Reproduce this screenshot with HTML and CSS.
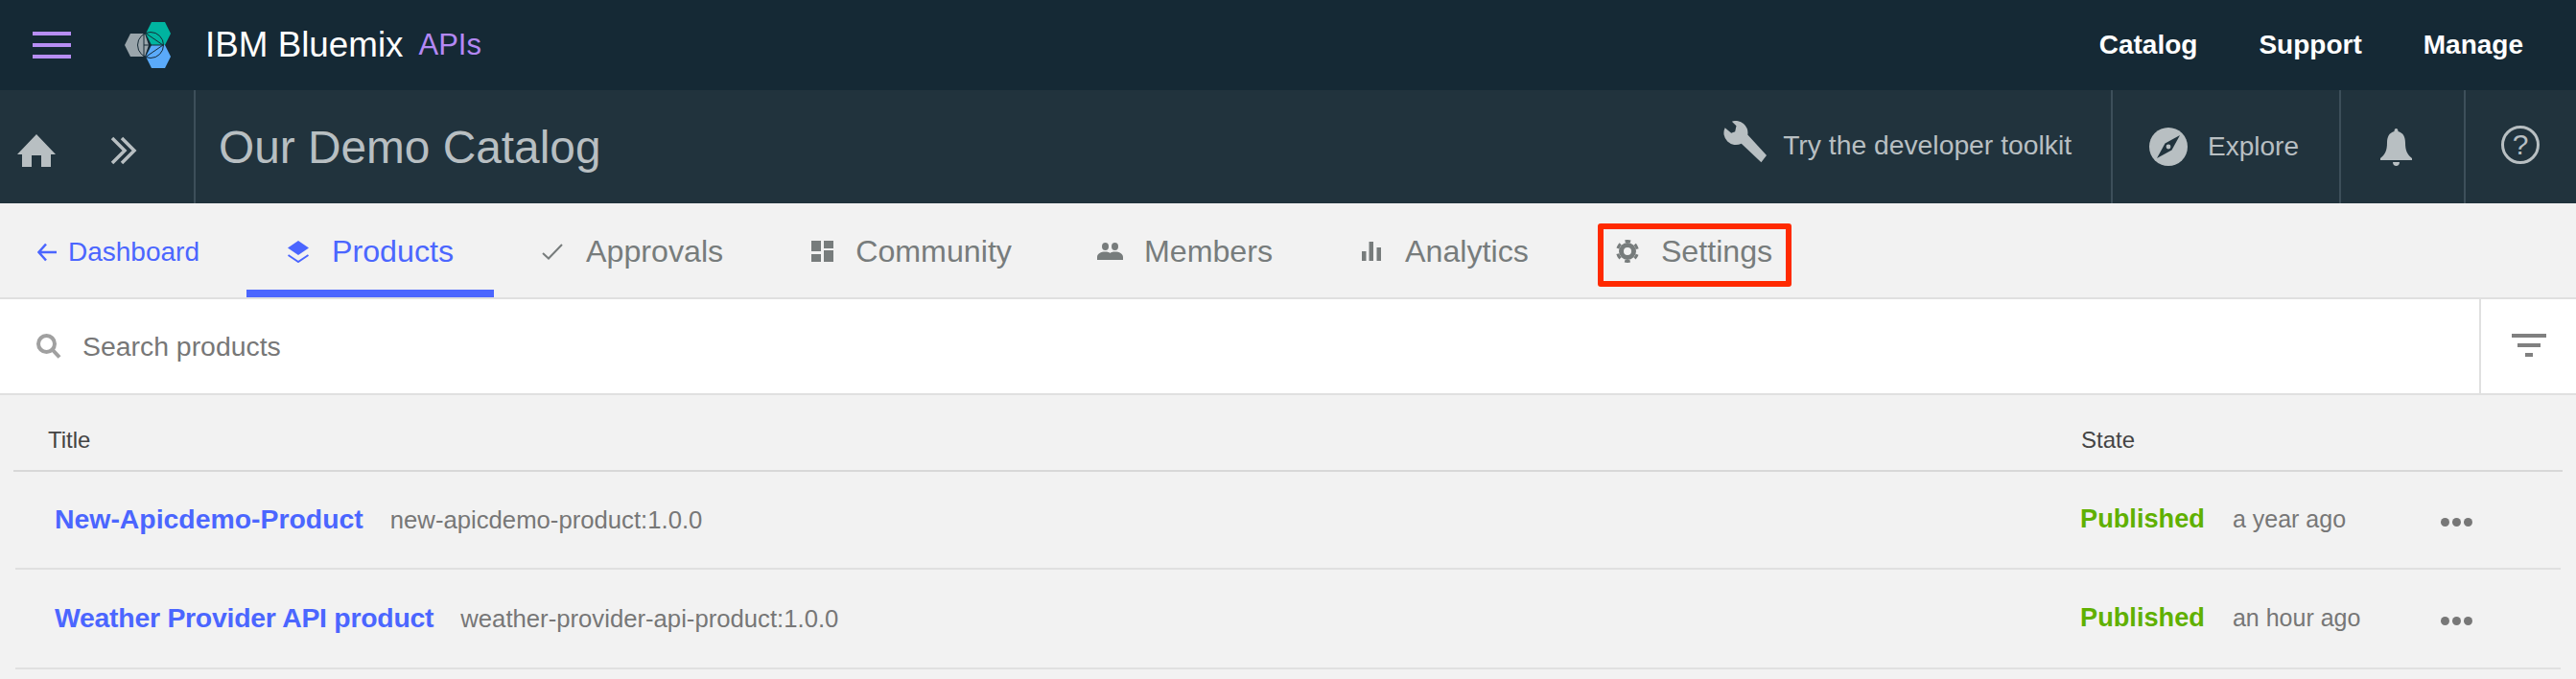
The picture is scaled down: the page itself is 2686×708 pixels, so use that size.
FILE: index.html
```html
<!DOCTYPE html>
<html lang="en">
<head>
    <meta charset="UTF-8">
    <title>Our Demo Catalog - IBM Bluemix APIs</title>
    <link rel="stylesheet" href="styles.css">
</head>
<body>
    <header class="topbar">
        <div class="hamburger"><span></span><span></span><span></span></div>
        <svg class="logo" viewBox="130 20 48 48">
            <polygon fill="#9aa5ab" points="130,44 136,32 151,32 155,44 151,56 136,56"/>
            <polygon fill="#00b4a0" points="152,32 158,20 172,20 178,32 172,44 158,44"/>
            <polygon fill="#5aaafa" points="152,56 158,44 172,44 178,56 172,68 158,68"/>
            <g fill="none" stroke="#152935" stroke-width="1">
                <circle cx="157" cy="44" r="13.5"/>
                <path d="M150 32V56M151 31L170 44L151 57M150 44H170"/>
            </g>
        </svg>
        <span class="brand">IBM Bluemix</span>
        <span class="brand-sub">APIs</span>
        <nav class="topnav">
            <a>Catalog</a>
            <a>Support</a>
            <a>Manage</a>
        </nav>
    </header>

    <div class="subbar">
        <div class="crumbs">
            <svg class="home" viewBox="0 0 40 34"><path d="M20 0L40 21H35V34H25V22H15V34H5V21H0Z"/></svg>
            <svg class="chevrons" viewBox="0 0 30 30"><path d="M2 2L15 15L2 28M12 2L25 15L12 28"/></svg>
        </div>
        <div class="catalog-name">Our Demo Catalog</div>
        <div class="tools">
            <div class="tool tool-kit">
                <svg class="wrench" viewBox="36 18 138 134"><path d="M40 40L60 57L72 52L76 34L62 20A38 38 0 0 1 112 62L172 128L155 150L92 90A38 38 0 0 1 40 40Z"/></svg>
                <span>Try the developer toolkit</span>
            </div>
            <div class="tool tool-explore">
                <svg class="compass" viewBox="0 0 40 40">
                    <circle cx="20" cy="20" r="20" fill="#b8bfc2"/>
                    <path d="M32 8L23.5 23.5L8 32L16.5 16.5Z" fill="#21333d"/>
                    <circle cx="20" cy="20" r="2.4" fill="#b8bfc2"/>
                </svg>
                <span>Explore</span>
            </div>
            <div class="tool tool-bell">
                <svg class="bell" viewBox="0 0 33 39"><path d="M16.5 0C18 0 18.5 1.500 18.500 3C24 4.500 26 9 26 15C26 23 28 27 33 31V33H0V31C5 27 7 23 7 15C7 9 9 4.500 14.500 3C14.500 1.500 15 0 16.500 0ZM13 35H20C20 37.500 18.500 39 16.500 39C14.500 39 13 37.500 13 35Z"/></svg>
            </div>
            <div class="tool tool-help">
                <div class="help">?</div>
            </div>
        </div>
    </div>

    <nav class="tabs">
        <a class="back">
            <svg class="back-arrow" viewBox="0 0 20 20"><path d="M9 1.500L1.500 10L9 18.500M1.500 10H20"/></svg>
            Dashboard
        </a>
        <a class="tab active">
            <span class="tab-icon"><svg width="22" height="23" viewBox="0 0 22 23"><path d="M11 0L22 7.500L11 15L0 7.500Z" fill="#4b66ff"/><path d="M0.500 15L11 22L21.500 15" fill="none" stroke="#4b66ff" stroke-width="2"/></svg></span>
            Products
        </a>
        <a class="tab">
            <span class="tab-icon"><svg width="22" height="17" viewBox="0 0 22 17"><path d="M1 10L7 15.500L21 1" fill="none" stroke="#777c7c" stroke-width="2"/></svg></span>
            Approvals
        </a>
        <a class="tab">
            <span class="tab-icon"><svg width="23" height="22" viewBox="0 0 23 22" fill="#777c7c"><rect width="10" height="11"/><rect y="14" width="10" height="8"/><rect x="13" width="10" height="8"/><rect x="13" y="10" width="10" height="12"/></svg></span>
            Community
        </a>
        <a class="tab">
            <span class="tab-icon"><svg width="27" height="18" viewBox="0 0 27 18" fill="#777c7c"><ellipse cx="8.500" cy="4" rx="3.500" ry="4"/><ellipse cx="18.500" cy="4" rx="3.500" ry="4"/><path d="M0 18V15C0 11.500 4 9.500 8.500 9.500C11 9.500 12.500 10 13.500 11C14.500 10 16 9.500 18.500 9.500C23 9.500 27 11.500 27 15V18Z"/></svg></span>
            Members
        </a>
        <a class="tab">
            <span class="tab-icon"><svg width="20" height="20" viewBox="0 0 20 20" fill="#777c7c"><rect y="10" width="4.500" height="10"/><rect x="7.500" width="4.500" height="20"/><rect x="15.500" y="6" width="4.500" height="14"/></svg></span>
            Analytics
        </a>
        <a class="tab tab-marked">
            <span class="tab-icon">
                <svg width="24" height="24" viewBox="0 0 24 24" fill="none" stroke="#777c7c">
                    <circle cx="12" cy="12" r="10.500" stroke-width="3" stroke-dasharray="5.500 5.500" stroke-dashoffset="2.750" transform="rotate(30 12 12)"/>
                    <circle cx="12" cy="12" r="6.500" stroke-width="5"/>
                </svg>
            </span>
            Settings
        </a>
    </nav>

    <div class="searchbar">
        <div class="search">
            <svg class="search-icon" viewBox="0 0 26 26"><circle cx="10.500" cy="10.500" r="8.500"/><path d="M16.500 16.500L24 24.500"/></svg>
            <span>Search products</span>
        </div>
        <div class="filter"><span></span><span></span><span></span></div>
    </div>

    <div class="list">
        <div class="list-head">
            <div>Title</div>
            <div>State</div>
        </div>
        <div class="row">
            <div class="row-title"><a>New-Apicdemo-Product</a><span>new-apicdemo-product:1.0.0</span></div>
            <div class="row-state"><b>Published</b><span>a year ago</span></div>
            <div class="dots"><i></i><i></i><i></i></div>
        </div>
        <div class="row">
            <div class="row-title"><a>Weather Provider API product</a><span>weather-provider-api-product:1.0.0</span></div>
            <div class="row-state"><b>Published</b><span>an hour ago</span></div>
            <div class="dots"><i></i><i></i><i></i></div>
        </div>
    </div>
</body>
</html>
```

FILE: styles.css
```css
body {
    margin: 0;
    background: #f2f2f2;
    font-family: "Liberation Sans", Arial, sans-serif;
    overflow: hidden;
}

/* top bar */
.topbar {
    display: flex;
    align-items: center;
    height: 94px;
    background: #152935;
    padding-left: 34px;
}
.hamburger {
    display: flex;
    flex-direction: column;
    gap: 8px;
    width: 40px;
}
.hamburger span {
    height: 4px;
    background: #b78ef5;
}
.logo {
    width: 48px;
    height: 48px;
    margin-left: 56px;
}
.brand {
    margin-left: 36px;
    font-size: 36.800px;
    color: #fff;
}
.brand-sub {
    margin-left: 16px;
    font-size: 31px;
    color: #b488f5;
}
.topnav {
    display: flex;
    gap: 64px;
    margin-left: auto;
    padding-right: 55px;
}
.topnav a {
    font-size: 28px;
    font-weight: bold;
    color: #fff;
}

/* catalog bar */
.subbar {
    display: flex;
    align-items: center;
    height: 118px;
    background: #21333d;
    color: #b8bfc2;
}
.crumbs {
    display: flex;
    align-items: center;
    box-sizing: border-box;
    width: 204px;
    height: 100%;
    padding: 7px 0 0 18px;
    border-right: 2px solid #3d4f5a;
}
.home {
    width: 40px;
    height: 34px;
    fill: #b8bfc2;
}
.chevrons {
    width: 30px;
    height: 30px;
    margin-left: 57px;
    fill: none;
    stroke: #b8bfc2;
    stroke-width: 3.500;
}
.catalog-name {
    padding-left: 24px;
    font-size: 47.800px;
}
.tools {
    display: flex;
    margin-left: auto;
    height: 100%;
    font-size: 28px;
}
.tool {
    display: flex;
    align-items: center;
    border-left: 2px solid #3d4f5a;
}
.tool-kit {
    border-left: none;
    padding-right: 41px;
    font-size: 28.300px;
}
.wrench {
    width: 46px;
    height: 44px;
    margin-right: 16px;
    fill: #b8bfc2;
    position: relative;
    top: -5px;
}
.tool-kit span {
    position: relative;
    top: -2px;
}
.tool-explore {
    padding: 0 42px 0 38px;
}
.compass {
    width: 40px;
    height: 40px;
    margin-right: 21px;
}
.tool-bell {
    padding: 0 54px 0 41px;
}
.bell {
    width: 33px;
    height: 39px;
    fill: #b8bfc2;
}
.tool-help {
    padding: 0 38px 4px 37px;
}
.help {
    box-sizing: border-box;
    width: 40px;
    height: 40px;
    border: 3px solid #b8bfc2;
    border-radius: 50%;
    font-size: 30px;
    line-height: 34px;
    text-align: center;
}

/* tabs */
.tabs {
    display: flex;
    box-sizing: border-box;
    height: 100px;
    padding-left: 39px;
    border-bottom: 2px solid #e0e0e0;
}
.back {
    display: flex;
    align-items: center;
    gap: 12px;
    margin-right: 49px;
    padding-top: 4px;
    font-size: 28px;
    color: #4b66ff;
}
.back-arrow {
    width: 20px;
    height: 20px;
    fill: none;
    stroke: #4b66ff;
    stroke-width: 2.500;
}
.tab {
    display: flex;
    align-items: center;
    gap: 20px;
    box-sizing: border-box;
    padding: 2px 42px 0 39px;
    margin-right: 7px;
    font-size: 32.200px;
    color: #777c7c;
    position: relative;
}
.tab-icon {
    display: flex;
    align-items: center;
    justify-content: center;
    width: 30px;
}
.tab.active {
    color: #4b66ff;
    border-bottom: 8px solid #4b66ff;
    padding-top: 10px;
}
/* red marker drawn over the settings tab */
.tab-marked::after {
    content: "";
    position: absolute;
    left: 23px;
    right: 22px;
    top: 21px;
    bottom: 11px;
    border: 6px solid #ff2a00;
    border-radius: 3px;
}

/* search */
.searchbar {
    display: flex;
    box-sizing: border-box;
    height: 100px;
    background: #fff;
    border-bottom: 2px solid #e0e0e0;
}
.search {
    display: flex;
    flex: 1;
    align-items: center;
    gap: 22px;
    padding-left: 38px;
    font-size: 28.400px;
    color: #777;
}
.search-icon {
    width: 26px;
    height: 26px;
    fill: none;
    stroke: #a0a0a0;
    stroke-width: 4;
}
.filter {
    display: flex;
    flex-direction: column;
    align-items: center;
    justify-content: center;
    gap: 6px;
    box-sizing: border-box;
    width: 101px;
    border-left: 2px solid #e0e0e0;
    padding-bottom: 2px;
}
.filter span {
    height: 4px;
    background: #808080;
}
.filter span:nth-child(1) { width: 36px; }
.filter span:nth-child(2) { width: 24px; }
.filter span:nth-child(3) { width: 8px; }

/* product list */
.list {
    padding: 0 16px;
}
.list-head {
    display: grid;
    grid-template-columns: 1fr 502px;
    align-items: center;
    box-sizing: border-box;
    height: 80px;
    margin: 0 -2px;
    padding: 16px 0 0 36px;
    border-bottom: 2px solid #d8d8d8;
    font-size: 24px;
    color: #444;
}
.row {
    display: grid;
    grid-template-columns: 1fr 376px 125px;
    align-items: center;
    box-sizing: border-box;
    height: 102px;
    padding: 0 0 2px 41px;
    border-bottom: 2px solid #e0e0e0;
}
.row + .row {
    height: 104px;
}
.row-title a {
    font-size: 28.400px;
    font-weight: bold;
    color: #4b66ff;
}
.row + .row .row-title a {
    letter-spacing: -0.25px;
}
.row-title span {
    margin-left: 28px;
    font-size: 25.700px;
    color: #777;
}
.row-state b {
    font-size: 27.200px;
    color: #60b000;
}
.row-state span {
    margin-left: 29px;
    font-size: 25px;
    color: #777;
}
.dots {
    display: flex;
    gap: 3px;
    padding-top: 6px;
}
.dots i {
    width: 9px;
    height: 9px;
    border-radius: 50%;
    background: #777;
}
```
